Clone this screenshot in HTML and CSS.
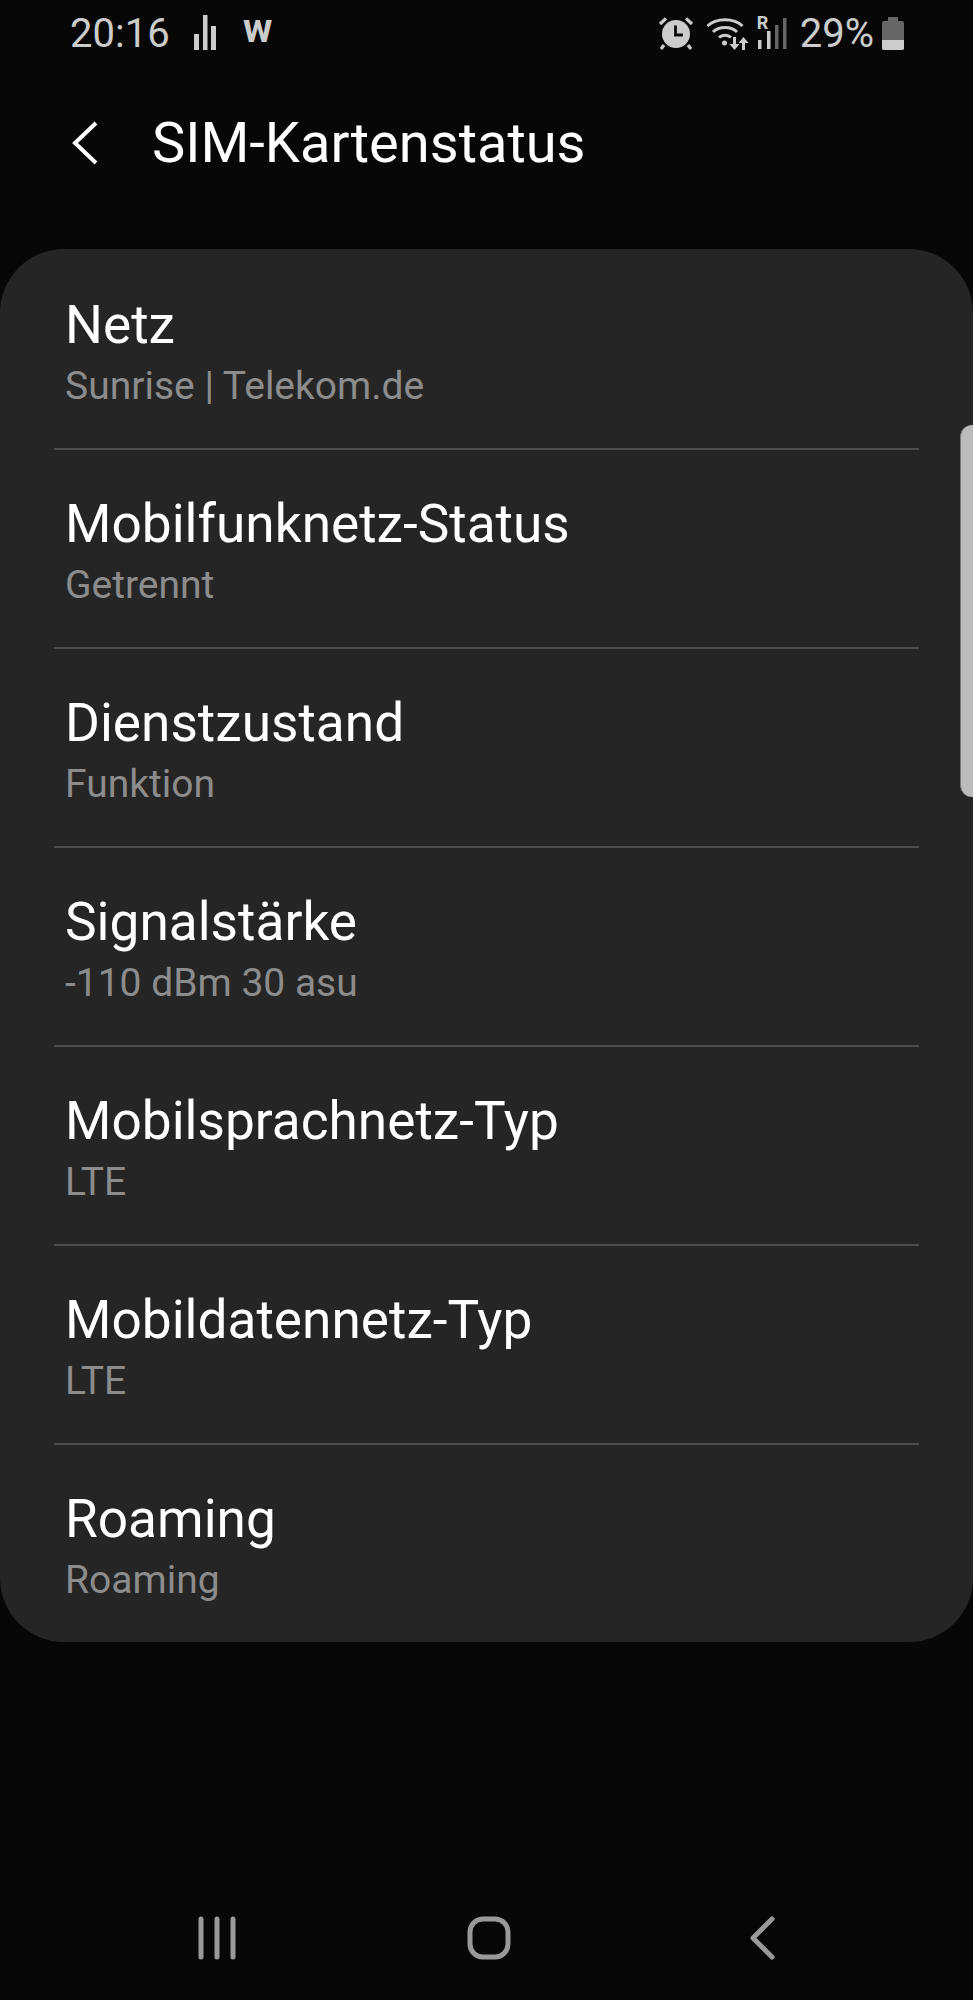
FILE: index.html
```html
<!DOCTYPE html>
<html lang="de">
<head>
<meta charset="UTF-8">
<meta name="viewport" content="width=device-width, initial-scale=1.0"/>
<title>SIM-Kartenstatus</title>
<link rel="stylesheet" href="styles.css">
</head>
<body>
<div class="screen">

  <!-- ---------- STATUS BAR ---------- -->
  <div class="statusbar">
    <div class="status-left">
      <span class="clock">20:16</span>
      <svg class="ic-bars" width="22" height="35" viewBox="0 0 22 35"><path fill="#ccc" d="M0 19h5v16H0zM9 0h4.500v35H9zM17 11h5v24h-5z"/></svg>
      <span class="carrier">w</span>
    </div>
    <div class="status-right">
      <svg class="ic-alarm" width="36" height="34" viewBox="0 0 36 34">
        <circle cx="18" cy="18" r="14" fill="#ccc"/>
        <path d="M17.500 9.500v9.500h7.500" fill="none" stroke="#0a0a0a" stroke-width="2.800"/>
        <path d="M2 8l6-5.500M34 8l-6-5.500M6 29L3 33M30 29l3 4" stroke="#ccc" stroke-width="3.200" fill="none"/>
      </svg>
      <svg class="ic-wifi" width="44" height="33" viewBox="0 0 44 33">
        <g fill="none" stroke="#ccc" stroke-width="3">
          <path d="M1.500 9C10 .5 28 .5 36.500 9"/>
          <path d="M7 15c6-6 18-6 24 0"/>
          <path d="M13 20.500c3-3 9-3 12 0"/>
        </g>
        <circle cx="18.500" cy="26" r="2.500" fill="#ccc"/>
        <path fill="#ccc" d="M27 20h3v7h3.500L28.500 33 23.500 27H27zM39 33h-3v-7h-3.500l5-6 5 6H39z"/>
      </svg>
      <div class="signal">
        <span class="roaming">R</span>
        <svg width="29" height="31" viewBox="0 0 29 31">
          <path fill="#ccc" d="M0 22h3.500v9H0zM9 13h3.500v18H9z"/>
          <path fill="#666" d="M17 7h3.500v24H17zM25 0h3.500v31H25z"/>
        </svg>
      </div>
      <span class="battery-text">29%</span>
      <div class="battery"><div class="battery-cap"></div><div class="battery-body"><div class="battery-level"></div></div></div>
    </div>
  </div>

  <!-- ---------- TOOLBAR ---------- -->
  <header class="toolbar">
    <svg class="back" width="30" height="46" viewBox="0 0 30 46"><path d="M26 3L5 23l21 20" fill="none" stroke="#fff" stroke-width="4"/></svg>
    <h1>SIM-Kartenstatus</h1>
  </header>

  <!-- ---------- LIST ---------- -->
  <main class="card">
    <div class="row"><div class="title">Netz</div><div class="sub">Sunrise | Telekom.de</div></div>
    <div class="row"><div class="title">Mobilfunknetz-Status</div><div class="sub">Getrennt</div></div>
    <div class="row"><div class="title">Dienstzustand</div><div class="sub">Funktion</div></div>
    <div class="row"><div class="title">Signalstärke</div><div class="sub">-110 dBm 30 asu</div></div>
    <div class="row"><div class="title">Mobilsprachnetz-Typ</div><div class="sub">LTE</div></div>
    <div class="row"><div class="title">Mobildatennetz-Typ</div><div class="sub">LTE</div></div>
    <div class="row"><div class="title">Roaming</div><div class="sub">Roaming</div></div>
  </main>
  <div class="thumb"></div>

  <!-- ---------- NAV BAR ---------- -->
  <nav class="navbar">
    <svg width="40" height="44" viewBox="0 0 40 44"><path d="M4 3v38M20 3v38M36 3v38" fill="none" stroke="#999" stroke-width="5" stroke-linecap="round"/></svg>
    <svg width="44" height="44" viewBox="0 0 44 44"><rect x="3" y="3" width="38" height="38" rx="13" fill="none" stroke="#999" stroke-width="5"/></svg>
    <svg width="28" height="44" viewBox="0 0 28 44"><path d="M24 3L5 22l19 19" fill="none" stroke="#999" stroke-width="5" stroke-linecap="round" stroke-linejoin="round"/></svg>
  </nav>

</div>
</body>
</html>
```

FILE: styles.css
```css
/* ---------- GLOBAL ---------- */
html,body{margin:0;padding:0;background:#070707;font-family:Roboto,"Liberation Sans",sans-serif;-webkit-font-smoothing:antialiased;}
.screen{position:relative;display:flex;flex-direction:column;height:2000px;overflow:hidden;}

/* ---------- STATUS BAR ---------- */
.statusbar{display:flex;justify-content:space-between;align-items:center;height:66px;padding:0 69px 0 70px;color:#ccc;}
.status-left,.status-right{display:flex;align-items:center;}
.clock{font-size:40px;width:124px;}
.carrier{font-size:40px;font-weight:700;margin-left:27px;line-height:30px;margin-top:-8px;}
.ic-bars{margin-top:-2px;}
.ic-wifi{margin-left:12px;}
.signal{position:relative;margin-left:8px;}
.signal svg{display:block;}
.roaming{position:absolute;left:-1px;top:-3px;font-size:18px;font-weight:700;line-height:16px;}
.battery-text{font-size:40px;margin-left:13px;}
.battery{display:flex;flex-direction:column;align-items:center;margin-left:8px;}
.battery-cap{width:10px;height:4px;background:#666;}
.battery-body{display:flex;flex-direction:column;justify-content:flex-end;width:22px;height:29px;background:#666;border-radius:2px;}
.battery-level{height:10px;background:#ccc;border-radius:0 0 2px 2px;}

/* ---------- TOOLBAR ---------- */
.toolbar{display:flex;align-items:center;height:154px;margin-bottom:29px;padding-left:70px;color:#fff;}
.toolbar h1{margin:0 0 0 52px;font-size:56px;font-weight:400;line-height:60px;}

/* ---------- LIST ---------- */
.card{background:#252525;border-radius:64px;padding-top:2px;}
.row{display:flex;flex-direction:column;height:197px;margin:0 54px 0 54px;padding-left:11px;border-bottom:2px solid #4d4d4d;}
.row:last-child{border-bottom:0;}
.title{color:#fff;font-size:53.200px;line-height:58px;margin-top:45px;}
.sub{color:#8c8c8c;font-size:39px;line-height:44px;margin-top:10px;}
.thumb{position:absolute;right:0;top:425px;width:12px;height:372px;background:#bcbcbc;border-left:1px solid #777;border-radius:12px 0 0 12px;}

/* ---------- NAV BAR ---------- */
.navbar{display:grid;grid-template-columns:repeat(3,1fr);justify-items:center;align-items:center;height:124px;margin-top:auto;padding:0 75px 0 81px;}
```
